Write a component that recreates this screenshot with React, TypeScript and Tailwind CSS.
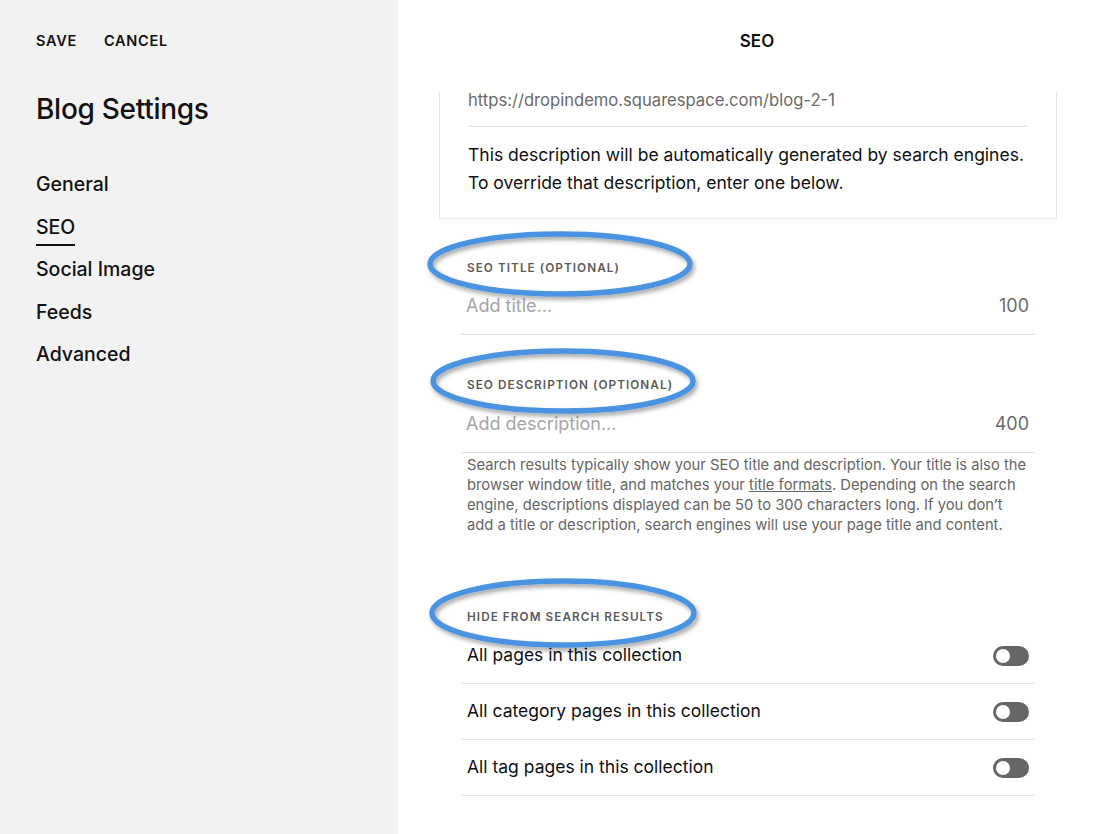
import React from "react";

const Ellipse = ({ w, h, className }: { w: number; h: number; className: string }) => (
  <svg className={className} width={w + 14} height={h + 14} viewBox={`0 0 ${w + 14} ${h + 14}`} fill="none">
    <defs>
      <filter id="sh" x="-10%" y="-20%" width="120%" height="140%">
        <feDropShadow dx="2" dy="3" stdDeviation="2" floodColor="#000" floodOpacity="0.35" />
      </filter>
    </defs>
    <ellipse cx={(w + 14) / 2} cy={(h + 14) / 2} rx={w / 2 - 2} ry={h / 2 - 2} stroke="#4a93e0" strokeWidth="5.5" filter="url(#sh)" />
  </svg>
);

const Toggle = () => (
  <div className="flex h-[20px] w-[36px] items-center rounded-full bg-[#666666] p-[3px]">
    <div className="h-[14px] w-[14px] rounded-full bg-white" />
  </div>
);

const Label = ({ children }: { children: React.ReactNode }) => (
  <div className="px-[7px] text-[11.75px] font-semibold uppercase leading-[14px] tracking-[0.09em] text-[#5b5b5b]">{children}</div>
);

export default function App() {
  const nav = ["General", "SEO", "Social Image", "Feeds", "Advanced"];
  return (
    <div className="flex h-[834px] w-[1100px] overflow-hidden font-['Inter','Liberation_Sans',sans-serif] text-[#111]">
      <aside className="flex w-[398px] shrink-0 flex-col bg-[#f2f2f2] px-9">
        <div className="flex gap-[27px] pt-[32px] text-[14.5px] font-semibold tracking-[0.05em] leading-[18px]">
          <span>SAVE</span>
          <span>CANCEL</span>
        </div>
        <h1 className="mt-[42px] text-[28px] font-medium leading-[34px] tracking-[-0.01em]">Blog Settings</h1>
        <nav className="mt-[45px] flex flex-col">
          {nav.map((n) => (
            <div key={n} className="h-[42.5px] text-[19.5px] font-medium leading-[26px]">
              <span className={n === "SEO" ? "inline-block border-b-2 border-[#111] pb-[4px]" : "inline-block"}>{n}</span>
            </div>
          ))}
        </nav>
      </aside>
      <main className="flex flex-1 flex-col bg-white">
        <header className="flex h-[92px] shrink-0 items-start justify-center pl-[16px] pt-[31px] text-[17px] font-semibold leading-[20px]">SEO</header>
        <div className="flex flex-col px-[41px] pr-[43px]">
          <div className="border-x border-b border-[#e6e6e6] px-[28px] pb-[21px]">
            <div className="text-[16.6px] leading-[16px] text-[#6b6b6b]">https://dropindemo.squarespace.com/blog-2-1</div>
            <div className="mt-[18px] border-t border-[#e3e3e3]" />
            <p className="mt-[14px] text-[17.5px] leading-[28px] text-[#111]">
              This description will be automatically generated by search engines.
              <br />
              To override that description, enter one below.
            </p>
          </div>
        </div>
        <div className="flex flex-col pl-[62px] pr-[65px]">
          <div className="relative mt-[42px]">
            <Label>SEO Title (Optional)</Label>
            <Ellipse w={264} h={64} className="pointer-events-none absolute left-[-39px] top-[-36px]" />
          </div>
          <div className="flex items-center justify-between border-b border-[#e0e0e0] px-[6px] pb-[17px] pt-[20px] text-[18px] leading-[22px]">
            <span className="text-[#a6a6a6]">Add title...</span>
            <span className="text-[#6b6b6b]">100</span>
          </div>
          <div className="relative mt-[43px]">
            <Label>SEO Description (Optional)</Label>
            <Ellipse w={264} h={64} className="pointer-events-none absolute left-[-36px] top-[-36px]" />
          </div>
          <div className="flex items-center justify-between border-b border-[#e0e0e0] px-[6px] pb-[17px] pt-[21px] text-[18px] leading-[22px]">
            <span className="text-[#a6a6a6]">Add description...</span>
            <span className="text-[#6b6b6b]">400</span>
          </div>
          <p className="mt-[2px] px-[7px] text-[14.75px] leading-[20px] text-[#666]">
            Search results typically show your SEO title and description. Your title is also the browser window title, and matches your{" "}
            <span className="underline">title formats</span>. Depending on the search engine, descriptions displayed can be 50 to 300 characters long. If you don’t add a title or description, search engines will use your page title and content.
          </p>
          <div className="relative mt-[75px]">
            <Label>Hide from search results</Label>
            <Ellipse w={266} h={68} className="pointer-events-none absolute left-[-37px] top-[-38px]" />
          </div>
          <div className="mt-[4px] flex flex-col text-[17.5px]">
            {["All pages in this collection", "All category pages in this collection", "All tag pages in this collection"].map((t) => (
              <div key={t} className="flex h-[56px] items-center justify-between border-b border-[#e3e3e3] pl-[7px] pr-[6px]">
                <span>{t}</span>
                <Toggle />
              </div>
            ))}
          </div>
        </div>
      </main>
    </div>
  );
}
